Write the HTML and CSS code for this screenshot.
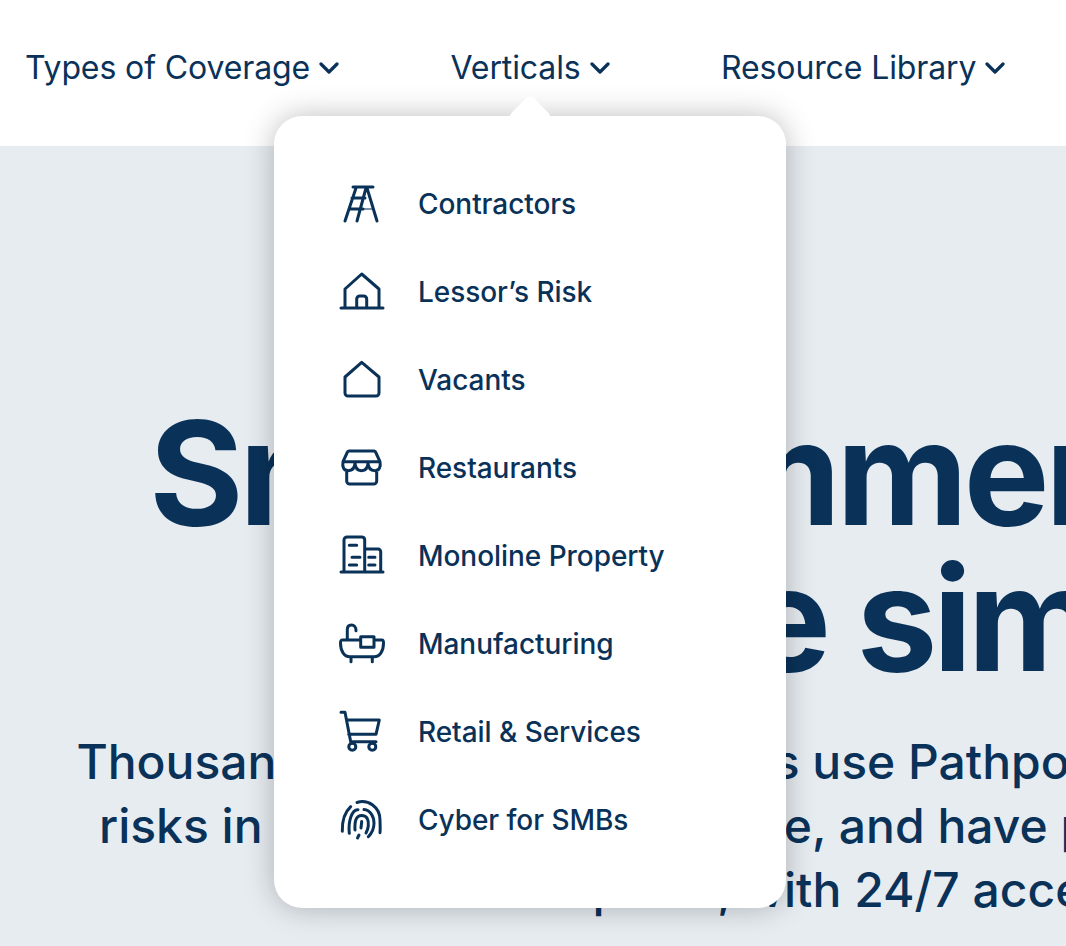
FILE: index.html
```html
<!DOCTYPE html>
<html lang="en">
<head>
<meta charset="utf-8">
<title>Pathpoint</title>
<link rel="stylesheet" href="styles.css">
</head>
<body>
<header class="header">
  <nav class="nav">
    <a class="nav-link">Types of Coverage <svg class="chev" viewBox="0 0 20 12"><path d="M2 2l8 8 8-8"/></svg></a>
    <a class="nav-link">Verticals <svg class="chev" viewBox="0 0 20 12"><path d="M2 2l8 8 8-8"/></svg></a>
    <a class="nav-link">Resource Library <svg class="chev" viewBox="0 0 20 12"><path d="M2 2l8 8 8-8"/></svg></a>
  </nav>
  <div class="menu">
    <a class="item"><svg class="ico" viewBox="0 0 48 48"><path d="M15 7H35M18 8 7 41M28 8 19 41M29 8 39 41M14 18H27M11 29H25"/><path class="thin" d="M25 29H35"/></svg><span>Contractors</span></a>
    <a class="item"><svg class="ico" viewBox="0 0 48 48"><path d="M3 40H45M7 40V21L23.700 6 41 21V40M18.700 40V31a3 3 0 0 1 3-3h4a3 3 0 0 1 3 3v9"/></svg><span>Lessor’s Risk</span></a>
    <a class="item"><svg class="ico" viewBox="0 0 48 48"><path d="M7 21 23.700 6.300 41 21V37a3 3 0 0 1-3 3H10a3 3 0 0 1-3-3Z"/></svg><span>Vacants</span></a>
    <a class="item"><svg class="ico" viewBox="0 0 48 48"><path d="M5 17.700 9 9a2.500 2.500 0 0 1 2-2H36a2.500 2.500 0 0 1 2 2L42 17.700M5 17.700H42M5 17.700C4 23 6 26.700 10 26.700S17 24 17 18C17 24 19 26.700 23.500 26.700S30 24 30 18C30 24 33 26.700 37 26.700S43 23 42 17.700M8.700 26V37a3 3 0 0 0 3 3H35.700a3 3 0 0 0 3-3V26"/></svg><span>Restaurants</span></a>
    <a class="item"><svg class="ico" viewBox="0 0 48 48"><path d="M3 40H45M6 40V8a3 3 0 0 1 3-3H24a3 3 0 0 1 2.700 3V40M26.700 17H40a2.700 2.700 0 0 1 2.700 3V40M11.300 13.300H18.700M14 25.300H22M11.300 33H18.700M30.700 25.300H37M30.700 33H37"/></svg><span>Monoline Property</span></a>
    <a class="item"><svg class="ico" viewBox="0 0 48 48"><path d="M9.300 20V9.500C9.300 6.500 11 5 13.500 5S18 7 18 10.700M22.700 20H4.500C2.500 20 2.500 21 2.500 23C2.500 31 6 36.700 12 36.700H36C42 36.700 45.500 31 45.500 23C45.500 21 45.500 20 44 20H36M13 37V41.700M34.300 37V41.700M22.700 16.700H36V27.300H22.700Z"/></svg><span>Manufacturing</span></a>
    <a class="item"><svg class="ico" viewBox="0 0 48 48"><path d="M3 4.300H7L12.700 33.700H38M8.700 12H41.300L38 26.300H10.700"/><circle cx="14.300" cy="38.700" r="3.500"/><circle cx="34.300" cy="38.700" r="3.500"/></svg><span>Retail &amp; Services</span></a>
    <a class="item"><svg class="ico" viewBox="0 0 48 48"><path d="M19 6.500C30 3 42 11 42 24C42 29 42.500 32 42 36.700M4.300 35.300C4 25 7 16 12.700 10.700M11.300 37.300C10 25 14 13.300 20 13.700M26 13.500C32 14 36 20 36 27.300C36 32 34 37 30.300 40.700M17 34C16.500 25 18 19.500 23.700 19.500C29 19.500 31 24 30.300 30C30 32.500 29 35 28 37M23.700 25.500L23 32M21 39 19.500 42"/></svg><span>Cyber for SMBs</span></a>
  </div>
</header>
<main class="hero">
  <div class="hero-inner">
    <h1 class="title">Small commercial risk<br>made simple</h1>
    <p class="lead">Thousands of insurance agents use Pathpoint to quote and bind small<br>risks in minutes, bind coverage, and have peace of mind knowing it,<br>all in one place, with 24/7 access to service</p>
  </div>
</main>
</body>
</html>
```
FILE: styles.css
```css
* { box-sizing: border-box; }
html, body { margin: 0; height: 100%; overflow: hidden; }
body { font-family: Inter, "Liberation Sans", sans-serif; color: #0a3259; background: #e7ecf1; width: 1066px; height: 946px; }
.header { position: relative; z-index: 2; height: 146px; background: #fff; }
.nav { display: flex; align-items: center; gap: 111.5px; height: 135px; padding-left: 25px; }
.nav-link { display: flex; align-items: center; gap: 9px; font-size: 32px; letter-spacing: -.12px; white-space: nowrap; }
.chev { width: 20px; height: 12px; fill: none; stroke: #0a3259; stroke-width: 3.2; stroke-linecap: round; stroke-linejoin: round; }
.menu { position: absolute; left: 274px; top: 116px; width: 512px; height: 792px; padding: 44px 0 44px 64px; background: #fff; border-radius: 28px; box-shadow: 0 0 30px rgba(0, 0, 0, .26); display: flex; flex-direction: column; }
.menu::before { content: ""; position: absolute; left: 240px; top: -15px; width: 32px; height: 32px; background: #fff; border-radius: 6px; transform: rotate(45deg); }
.item { display: flex; align-items: center; gap: 32px; height: 88px; font-size: 28px; font-weight: 500; letter-spacing: -.05px; white-space: nowrap; }
.ico { width: 48px; height: 48px; flex: none; fill: none; stroke: #0a3259; stroke-width: 3; stroke-linecap: round; stroke-linejoin: round; }
.ico .thin { stroke-width: 1.5; opacity: .7; }
.hero { overflow: hidden; height: 800px; }
.hero-inner { width: 1750px; text-align: center; white-space: nowrap; padding-top: 254px; }
.title { margin: 0; font-size: 144px; line-height: 146px; font-weight: 700; letter-spacing: -4.3px; }
.lead { margin: 38px 0 0; font-size: 48px; line-height: 64px; font-weight: 500; }
```
